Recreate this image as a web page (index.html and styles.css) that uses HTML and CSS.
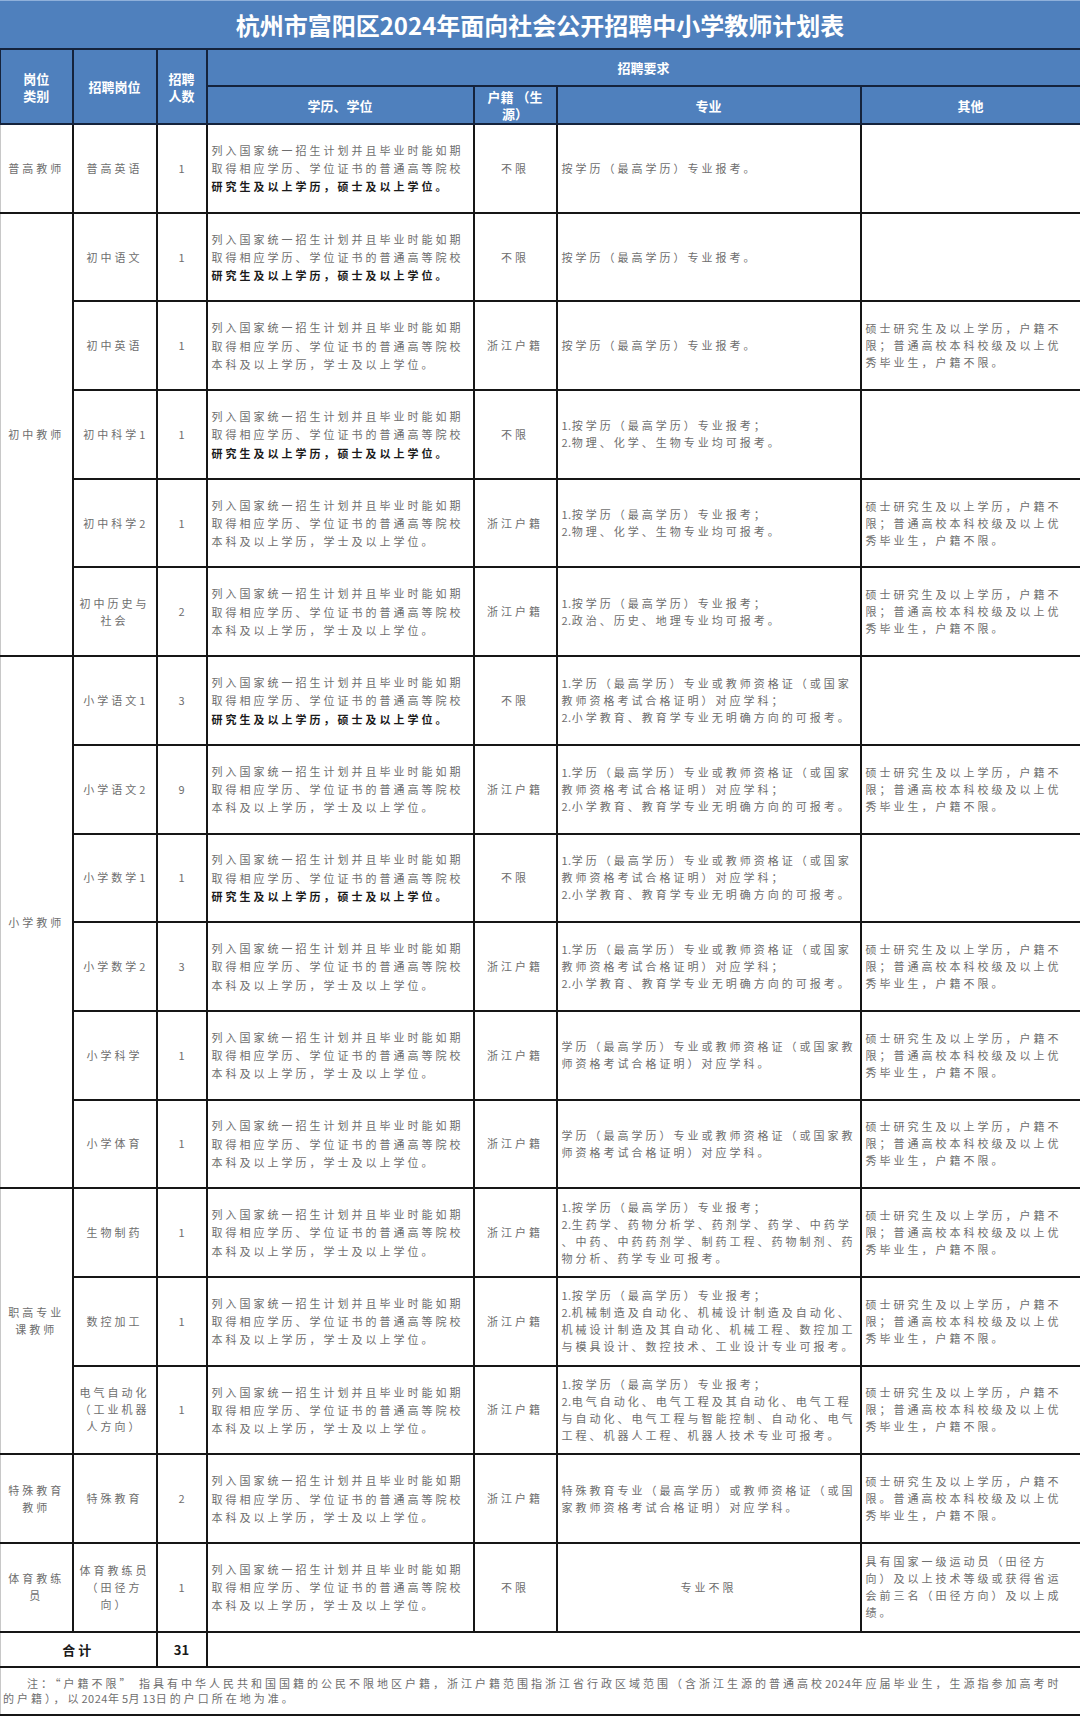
FILE: index.html
```html
<!DOCTYPE html>
<html lang="zh-CN">
<head>
<meta charset="utf-8">
<title>杭州市富阳区2024年面向社会公开招聘中小学教师计划表</title>
<link rel="stylesheet" href="styles.css">
</head>
<body>
<div class="sheet">
  <div class="title">杭州市富阳区2024年面向社会公开招聘中小学教师计划表</div>
  <table class="plan">
    <colgroup>
      <col class="c1"><col class="c2"><col class="c3"><col class="c4"><col class="c5"><col class="c6"><col class="c7">
    </colgroup>
    <thead>
      <tr class="h1">
        <th rowspan="2">岗位<br>类别</th>
        <th rowspan="2">招聘岗位</th>
        <th rowspan="2">招聘<br>人数</th>
        <th colspan="4">招聘要求</th>
      </tr>
      <tr class="h2">
        <th>学历、学位</th>
        <th>户籍 （生<br>源）</th>
        <th>专业</th>
        <th>其他</th>
      </tr>
    </thead>
    <tbody>
      <tr class="r">
        <td class="ctr">普高教师</td>
        <td class="ctr">普高英语</td>
        <td class="num">1</td>
        <td class="edu">列入国家统一招生计划并且毕业时能如期<br>取得相应学历、学位证书的普通高等院校<br><b>研究生及以上学历，硕士及以上学位。</b></td>
        <td class="ctr">不限</td>
        <td class="txt">按学历（最高学历）专业报考。</td>
        <td class="txt"></td>
      </tr>
      <tr class="r">
        <td class="ctr cat" rowspan="5">初中教师</td>
        <td class="ctr">初中语文</td>
        <td class="num">1</td>
        <td class="edu">列入国家统一招生计划并且毕业时能如期<br>取得相应学历、学位证书的普通高等院校<br><b>研究生及以上学历，硕士及以上学位。</b></td>
        <td class="ctr">不限</td>
        <td class="txt">按学历（最高学历）专业报考。</td>
        <td class="txt"></td>
      </tr>
      <tr class="r">
        <td class="ctr">初中英语</td>
        <td class="num">1</td>
        <td class="edu">列入国家统一招生计划并且毕业时能如期<br>取得相应学历、学位证书的普通高等院校<br>本科及以上学历，学士及以上学位。</td>
        <td class="ctr">浙江户籍</td>
        <td class="txt">按学历（最高学历）专业报考。</td>
        <td class="txt">硕士研究生及以上学历，户籍不<br>限；普通高校本科校级及以上优<br>秀毕业生，户籍不限。</td>
      </tr>
      <tr class="r">
        <td class="ctr">初中科学<span class="n">1</span></td>
        <td class="num">1</td>
        <td class="edu">列入国家统一招生计划并且毕业时能如期<br>取得相应学历、学位证书的普通高等院校<br><b>研究生及以上学历，硕士及以上学位。</b></td>
        <td class="ctr">不限</td>
        <td class="txt"><span class="n">1.</span>按学历（最高学历）专业报考；<br><span class="n">2.</span>物理、化学、生物专业均可报考。</td>
        <td class="txt"></td>
      </tr>
      <tr class="r">
        <td class="ctr">初中科学<span class="n">2</span></td>
        <td class="num">1</td>
        <td class="edu">列入国家统一招生计划并且毕业时能如期<br>取得相应学历、学位证书的普通高等院校<br>本科及以上学历，学士及以上学位。</td>
        <td class="ctr">浙江户籍</td>
        <td class="txt"><span class="n">1.</span>按学历（最高学历）专业报考；<br><span class="n">2.</span>物理、化学、生物专业均可报考。</td>
        <td class="txt">硕士研究生及以上学历，户籍不<br>限；普通高校本科校级及以上优<br>秀毕业生，户籍不限。</td>
      </tr>
      <tr class="r">
        <td class="ctr">初中历史与<br>社会</td>
        <td class="num">2</td>
        <td class="edu">列入国家统一招生计划并且毕业时能如期<br>取得相应学历、学位证书的普通高等院校<br>本科及以上学历，学士及以上学位。</td>
        <td class="ctr">浙江户籍</td>
        <td class="txt"><span class="n">1.</span>按学历（最高学历）专业报考；<br><span class="n">2.</span>政治、历史、地理专业均可报考。</td>
        <td class="txt">硕士研究生及以上学历，户籍不<br>限；普通高校本科校级及以上优<br>秀毕业生，户籍不限。</td>
      </tr>
      <tr class="r">
        <td class="ctr cat" rowspan="6">小学教师</td>
        <td class="ctr">小学语文<span class="n">1</span></td>
        <td class="num">3</td>
        <td class="edu">列入国家统一招生计划并且毕业时能如期<br>取得相应学历、学位证书的普通高等院校<br><b>研究生及以上学历，硕士及以上学位。</b></td>
        <td class="ctr">不限</td>
        <td class="txt"><span class="n">1.</span>学历（最高学历）专业或教师资格证（或国家<br>教师资格考试合格证明）对应学科；<br><span class="n">2.</span>小学教育、教育学专业无明确方向的可报考。</td>
        <td class="txt"></td>
      </tr>
      <tr class="r">
        <td class="ctr">小学语文<span class="n">2</span></td>
        <td class="num">9</td>
        <td class="edu">列入国家统一招生计划并且毕业时能如期<br>取得相应学历、学位证书的普通高等院校<br>本科及以上学历，学士及以上学位。</td>
        <td class="ctr">浙江户籍</td>
        <td class="txt"><span class="n">1.</span>学历（最高学历）专业或教师资格证（或国家<br>教师资格考试合格证明）对应学科；<br><span class="n">2.</span>小学教育、教育学专业无明确方向的可报考。</td>
        <td class="txt">硕士研究生及以上学历，户籍不<br>限；普通高校本科校级及以上优<br>秀毕业生，户籍不限。</td>
      </tr>
      <tr class="r">
        <td class="ctr">小学数学<span class="n">1</span></td>
        <td class="num">1</td>
        <td class="edu">列入国家统一招生计划并且毕业时能如期<br>取得相应学历、学位证书的普通高等院校<br><b>研究生及以上学历，硕士及以上学位。</b></td>
        <td class="ctr">不限</td>
        <td class="txt"><span class="n">1.</span>学历（最高学历）专业或教师资格证（或国家<br>教师资格考试合格证明）对应学科；<br><span class="n">2.</span>小学教育、教育学专业无明确方向的可报考。</td>
        <td class="txt"></td>
      </tr>
      <tr class="r">
        <td class="ctr">小学数学<span class="n">2</span></td>
        <td class="num">3</td>
        <td class="edu">列入国家统一招生计划并且毕业时能如期<br>取得相应学历、学位证书的普通高等院校<br>本科及以上学历，学士及以上学位。</td>
        <td class="ctr">浙江户籍</td>
        <td class="txt"><span class="n">1.</span>学历（最高学历）专业或教师资格证（或国家<br>教师资格考试合格证明）对应学科；<br><span class="n">2.</span>小学教育、教育学专业无明确方向的可报考。</td>
        <td class="txt">硕士研究生及以上学历，户籍不<br>限；普通高校本科校级及以上优<br>秀毕业生，户籍不限。</td>
      </tr>
      <tr class="r">
        <td class="ctr">小学科学</td>
        <td class="num">1</td>
        <td class="edu">列入国家统一招生计划并且毕业时能如期<br>取得相应学历、学位证书的普通高等院校<br>本科及以上学历，学士及以上学位。</td>
        <td class="ctr">浙江户籍</td>
        <td class="txt">学历（最高学历）专业或教师资格证（或国家教<br>师资格考试合格证明）对应学科。</td>
        <td class="txt">硕士研究生及以上学历，户籍不<br>限；普通高校本科校级及以上优<br>秀毕业生，户籍不限。</td>
      </tr>
      <tr class="r">
        <td class="ctr">小学体育</td>
        <td class="num">1</td>
        <td class="edu">列入国家统一招生计划并且毕业时能如期<br>取得相应学历、学位证书的普通高等院校<br>本科及以上学历，学士及以上学位。</td>
        <td class="ctr">浙江户籍</td>
        <td class="txt">学历（最高学历）专业或教师资格证（或国家教<br>师资格考试合格证明）对应学科。</td>
        <td class="txt">硕士研究生及以上学历，户籍不<br>限；普通高校本科校级及以上优<br>秀毕业生，户籍不限。</td>
      </tr>
      <tr class="r">
        <td class="ctr cat" rowspan="3">职高专业<br>课教师</td>
        <td class="ctr">生物制药</td>
        <td class="num">1</td>
        <td class="edu">列入国家统一招生计划并且毕业时能如期<br>取得相应学历、学位证书的普通高等院校<br>本科及以上学历，学士及以上学位。</td>
        <td class="ctr">浙江户籍</td>
        <td class="txt"><span class="n">1.</span>按学历（最高学历）专业报考；<br><span class="n">2.</span>生药学、药物分析学、药剂学、药学、中药学<br>、中药、中药药剂学、制药工程、药物制剂、药<br>物分析、药学专业可报考。</td>
        <td class="txt">硕士研究生及以上学历，户籍不<br>限；普通高校本科校级及以上优<br>秀毕业生，户籍不限。</td>
      </tr>
      <tr class="r">
        <td class="ctr">数控加工</td>
        <td class="num">1</td>
        <td class="edu">列入国家统一招生计划并且毕业时能如期<br>取得相应学历、学位证书的普通高等院校<br>本科及以上学历，学士及以上学位。</td>
        <td class="ctr">浙江户籍</td>
        <td class="txt"><span class="n">1.</span>按学历（最高学历）专业报考；<br><span class="n">2.</span>机械制造及自动化、机械设计制造及自动化、<br>机械设计制造及其自动化、机械工程、数控加工<br>与模具设计、数控技术、工业设计专业可报考。</td>
        <td class="txt">硕士研究生及以上学历，户籍不<br>限；普通高校本科校级及以上优<br>秀毕业生，户籍不限。</td>
      </tr>
      <tr class="r">
        <td class="ctr">电气自动化<br>（工业机器<br>人方向）</td>
        <td class="num">1</td>
        <td class="edu">列入国家统一招生计划并且毕业时能如期<br>取得相应学历、学位证书的普通高等院校<br>本科及以上学历，学士及以上学位。</td>
        <td class="ctr">浙江户籍</td>
        <td class="txt"><span class="n">1.</span>按学历（最高学历）专业报考；<br><span class="n">2.</span>电气自动化、电气工程及其自动化、电气工程<br>与自动化、电气工程与智能控制、自动化、电气<br>工程、机器人工程、机器人技术专业可报考。</td>
        <td class="txt">硕士研究生及以上学历，户籍不<br>限；普通高校本科校级及以上优<br>秀毕业生，户籍不限。</td>
      </tr>
      <tr class="r">
        <td class="ctr cat">特殊教育<br>教师</td>
        <td class="ctr">特殊教育</td>
        <td class="num">2</td>
        <td class="edu">列入国家统一招生计划并且毕业时能如期<br>取得相应学历、学位证书的普通高等院校<br>本科及以上学历，学士及以上学位。</td>
        <td class="ctr">浙江户籍</td>
        <td class="txt">特殊教育专业（最高学历）或教师资格证（或国<br>家教师资格考试合格证明）对应学科。</td>
        <td class="txt">硕士研究生及以上学历，户籍不<br>限。普通高校本科校级及以上优<br>秀毕业生，户籍不限。</td>
      </tr>
      <tr class="r">
        <td class="ctr cat">体育教练<br>员</td>
        <td class="ctr">体育教练员<br>（田径方<br>向）</td>
        <td class="num">1</td>
        <td class="edu">列入国家统一招生计划并且毕业时能如期<br>取得相应学历、学位证书的普通高等院校<br>本科及以上学历，学士及以上学位。</td>
        <td class="ctr">不限</td>
        <td class="ctr">专业不限</td>
        <td class="txt">具有国家一级运动员（田径方<br>向）及以上技术等级或获得省运<br>会前三名（田径方向）及以上成<br>绩。</td>
      </tr>
      <tr class="sum">
        <td colspan="2" class="ctr strong">合计</td>
        <td class="num strong">31</td>
        <td colspan="4"></td>
      </tr>
      <tr class="note">
        <td colspan="7">注：“户籍不限” 指具有中华人民共和国国籍的公民不限地区户籍，浙江户籍范围指浙江省行政区域范围（含浙江生源的普通高校<span class="n">2024</span>年应届毕业生，生源指参加高考时<br>的户籍），以<span class="n">2024</span>年<span class="n">5</span>月<span class="n">13</span>日的户口所在地为准。</td>
      </tr>
    </tbody>
  </table>
</div>
</body>
</html>
```

FILE: styles.css
```css
html, body {
  margin: 0;
  padding: 0;
  background: #ffffff;
}

body {
  font-family: "Noto Sans CJK SC", "Noto Sans", sans-serif;
  color: #6e6e6e;
}

.sheet {
  width: 1080px;
}

.title {
  height: 48px;
  background: #4f80bd;
  color: #ffffff;
  font-size: 24px;
  font-weight: 700;
  display: flex;
  align-items: center;
  justify-content: center;
  box-sizing: border-box;
  border-top: 1px solid #8fb0da;
}

.plan {
  width: 1080px;
  border-collapse: collapse;
  table-layout: fixed;
}

.c1 { width: 72px; }
.c2 { width: 84px; }
.c3 { width: 50px; }
.c4 { width: 267px; }
.c5 { width: 83px; }
.c6 { width: 304px; }
.c7 { width: 220px; }

.plan th,
.plan td {
  border: 2px solid #161616;
  padding: 0 4px;
  vertical-align: middle;
}

.plan td:first-child {
  border-left: 1px solid #c8c8c8;
}

.plan th {
  background: #4f80bd;
  color: #ffffff;
  font-size: 13px;
  font-weight: 700;
  line-height: 17px;
  border-color: #15233c;
  text-align: center;
}

.plan thead tr:first-child th:first-child {
  border-left: 1px solid #15233c;
}

.h1 { height: 37px; }
.h2 { height: 38px; }

.r { height: 88.7px; }

.plan td {
  font-size: 11px;
  letter-spacing: 3px;
  line-height: 17px;
}

.n {
  letter-spacing: 0.5px;
}

.ctr {
  text-align: center;
}

.num {
  text-align: center;
  font-size: 12px;
  letter-spacing: 0 !important;
}

.edu {
  text-align: left;
  white-space: nowrap;
  line-height: 18.3px !important;
}

.edu b {
  color: #1a1a1a;
  font-weight: 700;
}

.txt {
  text-align: left;
  white-space: nowrap;
}

.sum { height: 35px; }

.strong {
  color: #1a1a1a;
  font-weight: 700;
  font-size: 13px !important;
}

.note { height: 48px; }

.note td {
  padding: 0 2px;
  line-height: 15px;
  text-indent: 24px;
  white-space: nowrap;
  letter-spacing: 3px;
}
```
